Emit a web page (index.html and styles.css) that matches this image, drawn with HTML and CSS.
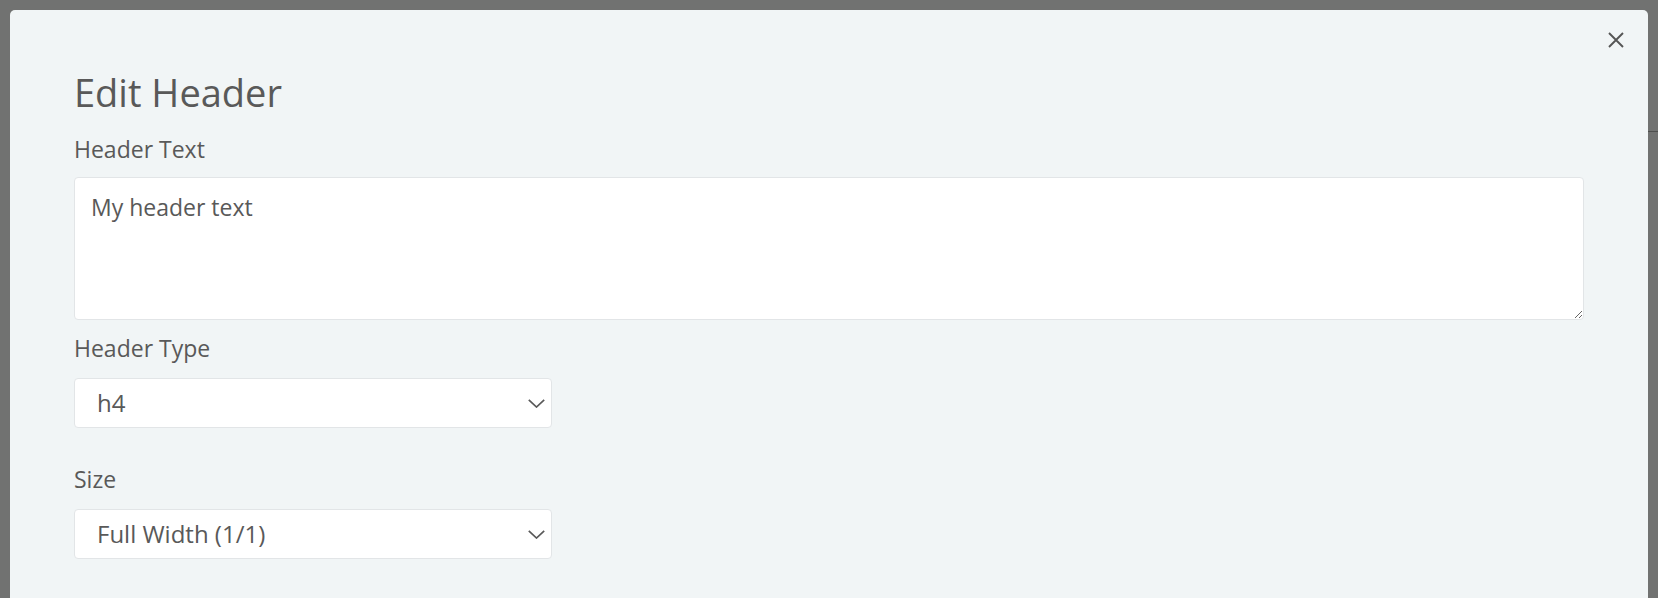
FILE: index.html
```html
<!DOCTYPE html>
<html lang="en">
<head>
<meta charset="utf-8">
<title>Edit Header</title>
<link rel="stylesheet" href="styles.css">
</head>
<body>
<div class="backdrop">
  <div class="bg-line"></div>
  <div class="modal">
    <button class="close" aria-label="Close">
      <svg width="16" height="16" viewBox="0 0 16 16"><path d="M1 1 L15 15 M15 1 L1 15" stroke="#555" stroke-width="1.9" fill="none"/></svg>
    </button>
    <h2 class="title">Edit Header</h2>
    <div class="group group-text">
      <label class="label">Header Text</label>
      <textarea class="textarea">My header text</textarea>
    </div>
    <div class="group group-type">
      <label class="label">Header Type</label>
      <div class="select">
        <span class="select-value">h4</span>
        <svg class="chevron" width="17" height="9" viewBox="0 0 17 9"><path d="M0.8 0.8 L8.5 8 L16.2 0.8" stroke="#595959" stroke-width="1.7" fill="none"/></svg>
      </div>
    </div>
    <div class="group group-size">
      <label class="label">Size</label>
      <div class="select">
        <span class="select-value">Full Width (1/1)</span>
        <svg class="chevron" width="17" height="9" viewBox="0 0 17 9"><path d="M0.8 0.8 L8.5 8 L16.2 0.8" stroke="#595959" stroke-width="1.7" fill="none"/></svg>
      </div>
    </div>
  </div>
</div>
</body>
</html>
```

FILE: styles.css
```css
html, body {
  margin: 0;
  padding: 0;
  height: 100%;
  overflow: hidden;
}
body {
  font-family: "Open Sans", "Noto Sans", sans-serif;
  color: #595959;
  background: #717271;
}
.backdrop {
  position: relative;
  height: 100%;
  padding: 10px 10px 0 10px;
  box-sizing: border-box;
}
.bg-line {
  position: absolute;
  right: 0;
  top: 131px;
  width: 10px;
  height: 1px;
  background: #4e4f4e;
}
.modal {
  position: relative;
  background: #f1f5f6;
  border-radius: 5px 5px 0 0;
  height: 100%;
  box-sizing: border-box;
  padding: 59px 64px 0 64px;
}
.close {
  position: absolute;
  top: 22px;
  right: 24px;
  width: 16px;
  height: 16px;
  padding: 0;
  border: 0;
  background: transparent;
  display: block;
}
.close svg {
  display: block;
}
.title {
  margin: 0;
  font-size: 38px;
  line-height: 46px;
  font-weight: 400;
}
.label {
  display: block;
  font-size: 23px;
  line-height: 28px;
  margin-top: 20px;
  margin-bottom: 14px;
}
.group-type .label {
  margin-top: 14px;
  margin-bottom: 16px;
}
.group-size .label {
  margin-top: 37px;
  margin-bottom: 16px;
}
.textarea {
  display: block;
  box-sizing: border-box;
  width: 100%;
  height: 143px;
  border: 1px solid #e2e5e7;
  border-radius: 4px;
  background: #fff;
  font-family: inherit;
  font-size: 23px;
  line-height: 32px;
  color: #595959;
  padding: 13px 16px;
  margin: 0;
}
.select {
  box-sizing: border-box;
  width: 478px;
  height: 50px;
  border: 1px solid #e2e5e7;
  border-radius: 4px;
  background: #fff;
  display: flex;
  align-items: center;
  justify-content: space-between;
  padding: 0 6px 0 22px;
}
.select-value {
  font-size: 24px;
  line-height: 30px;
}
.chevron {
  display: block;
}
```
